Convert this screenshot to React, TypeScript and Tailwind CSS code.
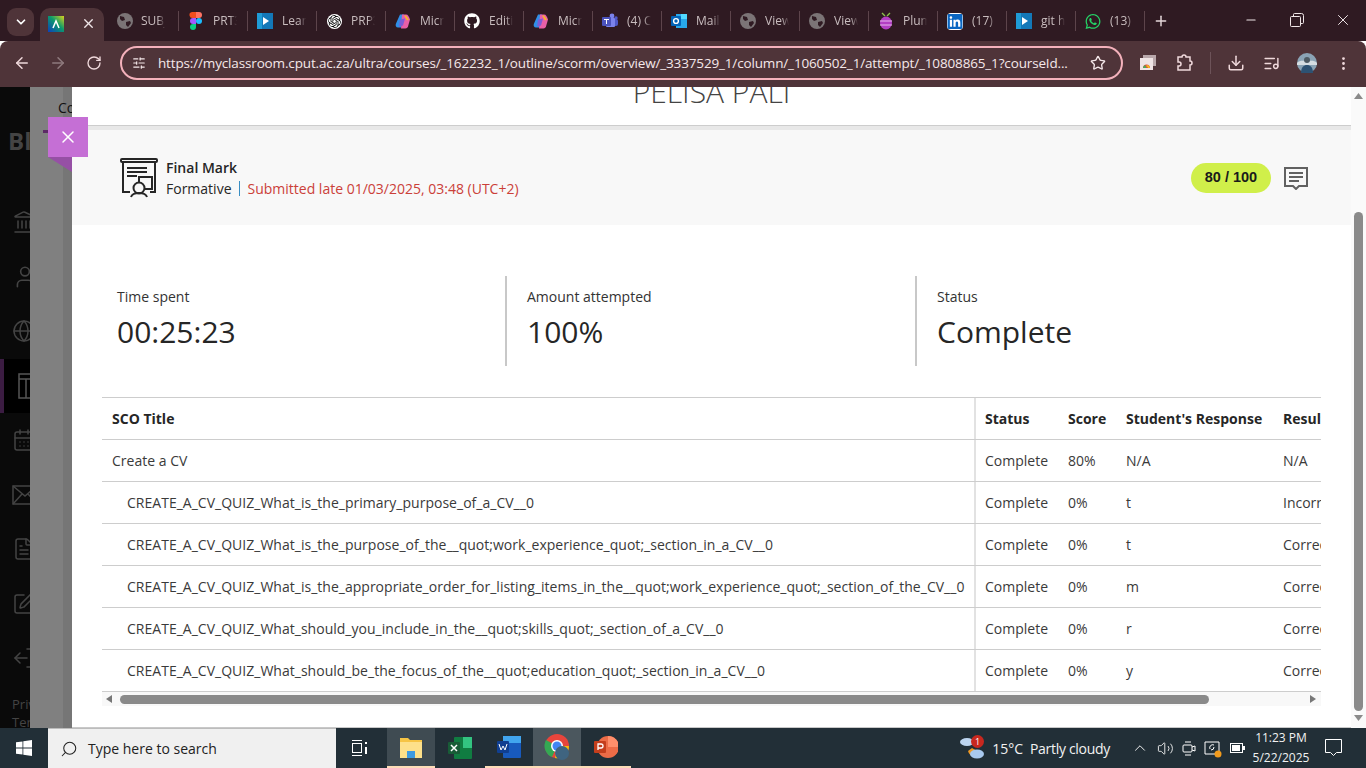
import React from "react";
import {
  ArrowLeft, ArrowRight, RotateCw, Star, Download, Minus, Plus, X, ChevronDown, ChevronUp, SlidersHorizontal,
  ListMusic, MoreVertical, Landmark, User, Globe, CalendarDays, FileText, SquarePen, LogOut, Search, Volume2,
} from "lucide-react";
import { FaGithub, FaLinkedin, FaWhatsapp } from "react-icons/fa";
import { SiOpenai } from "react-icons/si";

const Earth = () => (
  <svg width="16" height="16" viewBox="0 0 16 16"><circle cx="8" cy="8" r="8" fill="#7b7476" /><path d="M3 3l4 1 1 3-3 1-2-2zM9 9l4-1 1 2-3 4-2-2z" fill="#2f1a22" /></svg>
);
const Figma = () => (
  <svg width="16" height="18" viewBox="0 0 12 18">
    <path d="M2 0h4v6H3a3 3 0 0 1-1-6z" fill="#f24e1e" /><path d="M6 0h3a3 3 0 0 1 0 6H6z" fill="#ff7262" />
    <path d="M3 6h3v6H3a3 3 0 0 1 0-6z" fill="#a259ff" /><circle cx="9" cy="9" r="3" fill="#1abcfe" />
    <path d="M3 12h3v3a3 3 0 1 1-3-3z" fill="#0acf83" />
  </svg>
);
const LearnIcon = () => (
  <svg width="16" height="16" viewBox="0 0 16 16"><rect width="16" height="16" fill="#1378b8" /><rect width="5" height="16" fill="#1f9bd6" /><path d="M6 4l6 4-6 4z" fill="#fff" /></svg>
);
const Copilot = () => (
  <svg width="17" height="17" viewBox="0 0 16 16">
    <path d="M5 1h4L6 14H3C1 14 0 12 1 10z" fill="#2f8fe8" /><path d="M7 1h4c2 0 3 2 4 5l-2 7c-1 2-2 2-4 2H6z" fill="#e85fa8" />
    <path d="M9 2h2l3 4-2 1z" fill="#f7b32b" /><path d="M5 6l5-1-2 7-4 1z" fill="#7b5cd6" />
  </svg>
);
const Teams = () => (
  <svg width="16" height="16" viewBox="0 0 16 16"><circle cx="10" cy="3" r="2.4" fill="#7b83eb" /><circle cx="14" cy="5" r="1.7" fill="#5059c9" /><rect x="8" y="6" width="8" height="7" rx="2" fill="#5059c9" /><rect x="4" y="5" width="9" height="9" rx="1" fill="#7b83eb" /><rect x="0" y="4" width="9" height="9" rx="1" fill="#4b53bc" /><path d="M2 6h5v1H5v4H4V7H2z" fill="#fff" /></svg>
);
const Outlook = () => (
  <svg width="16" height="16" viewBox="0 0 16 16"><rect x="5" y="1" width="11" height="14" fill="#28a8ea" /><rect x="10" y="1" width="6" height="5" fill="#50d9ff" /><rect x="0" y="3" width="10" height="10" rx="1" fill="#0364b8" /><circle cx="5" cy="8" r="2.4" fill="none" stroke="#fff" strokeWidth="1.4" /></svg>
);
const Plum = () => (
  <svg width="16" height="18" viewBox="0 0 16 18"><path d="M4 1l3 3M12 1L9 4" stroke="#8bc34a" strokeWidth="1.4" /><ellipse cx="8" cy="11" rx="6" ry="6.500" fill="#b33fc4" /><path d="M2 9h12M2 13h12" stroke="#e7b6ef" strokeWidth="1.2" /></svg>
);
const AntIcon = () => (
  <svg width="16" height="16" viewBox="0 0 16 16">
    <defs><linearGradient id="ant" x1="0" y1="1" x2="1" y2="0"><stop offset="0" stopColor="#0b3fbf" /><stop offset="0.55" stopColor="#0b9a6b" /><stop offset="1" stopColor="#d9d21f" /></linearGradient></defs>
    <rect width="16" height="16" fill="url(#ant)" /><path d="M5 12l3-7 3 7" stroke="#fff" strokeWidth="1.5" fill="none" />
  </svg>
);
const tabs: [React.ReactNode, string][] = [
  [<Earth />, "SUBJ"],
  [<Figma />, "PRT3"],
  [<LearnIcon />, "Learn"],
  [<SiOpenai size={15} className="rounded-full bg-white p-[1px] text-black" />, "PRP3"],
  [<Copilot />, "Micro"],
  [<FaGithub size={16} color="#fff" />, "Editin"],
  [<Copilot />, "Micro"],
  [<Teams />, "(4) C"],
  [<Outlook />, "Mail"],
  [<Earth />, "View"],
  [<Earth />, "View"],
  [<Plum />, "Plum"],
  [<FaLinkedin size={17} color="#0a66c2" className="rounded-sm bg-white" />, "(17)"],
  [<LearnIcon />, "git h"],
  [<FaWhatsapp size={17} color="#25d366" />, "(13)"],
];
const rows = [
  ["Create a CV", "Complete", "80%", "N/A", "N/A", false],
  ["CREATE_A_CV_QUIZ_What_is_the_primary_purpose_of_a_CV__0", "Complete", "0%", "t", "Incorrect", true],
  ["CREATE_A_CV_QUIZ_What_is_the_purpose_of_the__quot;work_experience_quot;_section_in_a_CV__0", "Complete", "0%", "t", "Correct", true],
  ["CREATE_A_CV_QUIZ_What_is_the_appropriate_order_for_listing_items_in_the__quot;work_experience_quot;_section_of_the_CV__0", "Complete", "0%", "m", "Correct", true],
  ["CREATE_A_CV_QUIZ_What_should_you_include_in_the__quot;skills_quot;_section_of_a_CV__0", "Complete", "0%", "r", "Correct", true],
  ["CREATE_A_CV_QUIZ_What_should_be_the_focus_of_the__quot;education_quot;_section_in_a_CV__0", "Complete", "0%", "y", "Correct", true],
] as const;

const Row = ({ cells, head, indent }: { cells: readonly string[]; head?: boolean; indent?: boolean }) => (
  <div className={`flex h-[42px] w-[1300px] items-center border-b border-[#cdcdcd] text-[14px] ${head ? "font-bold text-[#262626]" : "text-[#3a3a3a]"}`}>
    <div className={`flex h-full w-[874px] shrink-0 items-center whitespace-nowrap border-r-2 border-[#e2e2e2] ${head ? "" : "tracking-[0.016px]"} ${indent ? "pl-[25px]" : "pl-[10px]"}`}>{cells[0]}</div>
    <div className="w-[92px] shrink-0 pl-[9px]">{cells[1]}</div>
    <div className="w-[58px] shrink-0">{cells[2]}</div>
    <div className="w-[157px] shrink-0">{cells[3]}</div>
    <div className="w-[100px] shrink-0">{cells[4]}</div>
  </div>
);

const Stat = ({ label, value, last }: { label: string; value: string; last?: boolean }) => (
  <div className={`h-[90px] w-[410px] pl-[20px] pt-[11px] ${last ? "" : "border-r-2 border-[#c8c8c8]"}`}>
    <div className="text-[14px] leading-[20px] text-[#333]">{label}</div>
    <div className="mt-[5px] text-[30px] leading-[40px] text-[#262626]">{value}</div>
  </div>
);

const SideIcon = ({ children, active }: { children: React.ReactNode; active?: boolean }) => (
  <div className={`flex h-[54.5px] shrink-0 items-center text-[#444] ${active ? "border-l-4 border-[#3b1c42] bg-black pl-[14px]" : "pl-[12px]"}`}>{children}</div>
);

export default function App() {
  return (
    <div className="flex h-[768px] w-[1366px] flex-col overflow-hidden bg-white font-['Open_Sans',sans-serif]">
      {/* tab strip */}
      <div className="flex h-[41px] shrink-0 items-end bg-[#2f1a22] text-[#c9bdbf]">
        <div className="mb-[5px] ml-[7px] flex h-[28px] w-[27px] items-center justify-center rounded-[9px] bg-[#4f3439] text-white"><ChevronDown size={14} strokeWidth={3} /></div>
        <div className="ml-[6px] flex h-[33px] w-[64px] items-center rounded-t-[10px] bg-[#4f3439] pb-[2px] pl-[8px]">
          <AntIcon />
          <X size={15} strokeWidth={2.2} color="#f0e6e8" className="ml-[17px]" />
        </div>
        <div className="ml-[4px] flex h-[41px] items-center pt-[1px]">
          {tabs.map(([icon, text], i) => (
            <div key={i} className={`flex h-[20px] items-center border-r border-[#5d444b] pl-[9px] ${i === 0 ? "w-[71px]" : "w-[69px]"}`}>
              <div className="flex w-[16px] shrink-0 justify-center">{icon}</div>
              <div className={`w-[24px] overflow-hidden whitespace-nowrap text-[12px] [mask-image:linear-gradient(to_right,black_70%,transparent)] ${i === 0 ? "ml-[8px]" : "ml-[9px]"}`}>{text}</div>
            </div>
          ))}
          <Plus size={16} strokeWidth={2.2} color="#e6d8da" className="ml-[8px]" />
        </div>
        <div className="flex-1" />
        <div className="flex h-[41px] items-center pb-[1px] text-[#f0e6e8]">
          <div className="flex w-[46px] justify-center"><Minus size={14} /></div>
          <div className="flex w-[46px] justify-center">
            <svg width="14" height="14" viewBox="0 0 14 14" fill="none" stroke="#f0e6e8"><path d="M3.500 3V1.500a1 1 0 0 1 1-1h7a2 2 0 0 1 2 2v7a1 1 0 0 1-1 1H11" /><rect x=".5" y="3.500" width="10" height="10" rx="1" /></svg>
          </div>
          <div className="flex w-[46px] justify-center"><X size={18} strokeWidth={1.3} /></div>
        </div>
      </div>
      {/* toolbar */}
      <div className="flex h-[46px] shrink-0 items-center rounded-t-[8px] bg-[#4f3439] pb-[2px] text-[#f0d9dc]">
        <ArrowLeft size={18} className="ml-[13px]" />
        <ArrowRight size={18} color="#8f7a7e" className="ml-[18px]" />
        <RotateCw size={16} className="ml-[19px]" />
        <div className="ml-[18px] flex h-[34px] w-[1003px] items-center rounded-full border-2 border-[#f3b1bb] pl-[10px] pr-[15px] text-[#f5e8ea]">
          <SlidersHorizontal size={14} />
          <span className="ml-[12px] w-[912px] whitespace-nowrap text-[13.5px] tracking-[-0.15px]">https://myclassroom.cput.ac.za/ultra/courses/_162232_1/outline/scorm/overview/_3337529_1/column/_1060502_1/attempt/_10808865_1?courseId...</span>
          <Star size={16} className="ml-[21px]" />
        </div>
        <svg className="ml-[17px]" width="16" height="16" viewBox="0 0 16 16"><rect x="3" y="0" width="13" height="11" fill="#b9a8ab" /><rect y="3" width="13" height="12" fill="#efe4e5" /><path d="M3 13a3.500 3.500 0 0 1 7 0z" fill="#e44c3c" /><path d="M3 13a3.500 3.500 0 0 1 2-3l1.500 3z" fill="#49a85a" /><path d="M8 13a1.500 1.500 0 0 0-1.500-1.500V10a3.500 3.500 0 0 1 3.500 3z" fill="#f4bc1c" /></svg>
        <svg className="ml-[20px]" width="18" height="18" viewBox="0 0 18 18" fill="none" stroke="#f0d9dc" strokeWidth="1.5"><path d="M2 3h4a2 2 0 0 1 4 0h4v4a2 2 0 0 1 0 4v5H2v-4h1a2 2 0 0 0 0-4H2z" /></svg>
        <div className="ml-[16px] h-[22px] w-px bg-[#6d5359]" />
        <Download size={18} className="ml-[16px]" />
        <ListMusic size={17} className="ml-[18px]" />
        <svg className="ml-[17px]" width="20" height="20" viewBox="0 0 20 20"><circle cx="10" cy="10" r="10" fill="#8aa3b5" /><path d="M0 10c3-3 6-2 10-2s7-1 10 2v2H0z" fill="#d5dde2" /><circle cx="10" cy="7" r="3" fill="#4d5a63" /><path d="M4 20c0-6 3-8 6-8s6 2 6 8z" fill="#2d5273" /></svg>
        <MoreVertical size={17} className="ml-[18px]" />
      </div>
      {/* content */}
      <div className="relative flex min-h-0 flex-1">
        <div className="flex w-[30px] shrink-0 flex-col overflow-hidden bg-[#0a0a0a] text-[#444]">
          <div className="ml-[8px] mt-[42px] h-[66px] shrink-0 whitespace-nowrap text-[24px] font-bold leading-[24px]">Bl</div>
          <SideIcon><Landmark size={24} strokeWidth={1.5} className="shrink-0" /></SideIcon>
          <SideIcon><User size={26} strokeWidth={1.5} className="shrink-0" /></SideIcon>
          <SideIcon><Globe size={24} strokeWidth={1.5} className="shrink-0" /></SideIcon>
          <SideIcon active>
            <svg className="shrink-0" width="26" height="26" viewBox="0 0 26 26" fill="none" stroke="#555" strokeWidth="1.5"><rect x="1" y="1" width="24" height="24" /><path d="M1 6h24M8 6v19" /></svg>
          </SideIcon>
          <SideIcon><CalendarDays size={24} strokeWidth={1.5} className="shrink-0" /></SideIcon>
          <SideIcon>
            <svg className="shrink-0" width="26" height="20" viewBox="0 0 26 20" fill="none" stroke="#444" strokeWidth="1.5"><rect x="1" y="1" width="24" height="18" /><path d="M1 1l12 10L25 1M1 19l9-10M25 19l-9-10" /></svg>
          </SideIcon>
          <SideIcon><FileText size={24} strokeWidth={1.5} className="shrink-0" /></SideIcon>
          <SideIcon><SquarePen size={24} strokeWidth={1.5} className="shrink-0" /></SideIcon>
          <SideIcon><LogOut size={24} strokeWidth={1.5} className="shrink-0 rotate-180" /></SideIcon>
          <div className="ml-[12px] mt-[9px] shrink-0 whitespace-nowrap text-[13px] leading-[18px]">Priv<br />Ter</div>
        </div>
        <div className="flex w-[42px] shrink-0 bg-[#808080]">
          <div className="relative z-10 w-[33px] whitespace-nowrap pl-[28px] pt-[10px] text-[14px] text-[#111]">Co</div>
          <div className="w-[9px] bg-[#767676]" />
        </div>
        <main className="relative z-20 flex w-[1279px] shrink-0 flex-col overflow-hidden border-b border-[#c8c8c8] bg-white">
          <div className="flex h-[38px] shrink-0 items-end justify-center overflow-hidden text-[30px] font-light leading-[38px] text-[#444]"><span className="mb-[14px] block shrink-0">PELISA PALI</span></div>
          <div className="h-[5px] shrink-0 border-t border-[#cdcdcd] bg-[#e8e8e8]" />
          <div className="flex h-[95px] shrink-0 items-center bg-[#f8f8f8] pl-[48px] pr-[43px]">
            <svg width="38" height="40" viewBox="0 0 38 40" fill="none" stroke="#262626" strokeWidth="2">
              <rect x="1" y="1" width="36" height="3" rx="1" />
              <path d="M3 4v30h7M35 4v30h-5" />
              <path d="M7 10h20M7 14h20M7 18h10" />
              <rect x="19" y="19" width="13" height="12" />
              <circle cx="19" cy="30" r="5.500" fill="#f8f8f8" />
              <path d="M11 39c1-3 4-4 8-4s7 1 8 4" />
            </svg>
            <div className="ml-[8px] flex flex-col text-[14px] leading-[21px]">
              <div className="font-semibold text-[#262626]">Final Mark</div>
              <div className="flex items-center">
                <span className="text-[#262626]">Formative</span>
                <span className="ml-[7px] mr-[8px] h-[15px] w-px bg-[#3a8fc4]" />
                <span className="text-[#cb4038]">Submitted late 01/03/2025, 03:48 (UTC+2)</span>
              </div>
            </div>
            <div className="flex-1" />
            <div className="flex h-[30px] w-[80px] items-center justify-center rounded-full bg-[#d0ef4a] font-['Liberation_Sans',sans-serif] text-[14.5px] font-bold text-[#1a1a1a]">80 / 100</div>
            <svg className="ml-[13px]" width="24" height="24" viewBox="0 0 24 24" fill="none" stroke="#616161" strokeWidth="2">
              <path d="M1 2h22v18h-8l-3 3-3-3H1z" />
              <path d="M5 7h14M5 11h14M5 15h10" />
            </svg>
          </div>
          <div className="ml-[25px] mt-[51px] flex shrink-0"><Stat label="Time spent" value="00:25:23" /><Stat label="Amount attempted" value="100%" /><Stat label="Status" value="Complete" last /></div>
          <div className="mx-[30px] mt-[31px] w-[1219px] shrink-0 overflow-hidden border-t border-[#cdcdcd]">
            <Row head cells={["SCO Title", "Status", "Score", "Student's Response", "Result"]} />
            {rows.map((r, i) => (<Row key={i} indent={r[5]} cells={[r[0], r[1], r[2], r[3], r[4]]} />))}
            <div className="flex h-[14px] items-center bg-[#f8f8f8]">
              <svg className="ml-[4px]" width="6" height="8" viewBox="0 0 6 8"><path d="M6 0v8L0 4z" fill="#777" /></svg>
              <div className="ml-[8px] h-[9px] w-[1089px] rounded-full bg-[#8a8a8a]" />
              <svg className="ml-[101px]" width="6" height="8" viewBox="0 0 6 8"><path d="M0 0v8l6-4z" fill="#777" /></svg>
            </div>
          </div>
        </main>
        <div className="flex w-[15px] shrink-0 flex-col items-center bg-[#fafafa]">
          <svg className="mt-[6px]" width="9" height="6" viewBox="0 0 9 6"><path d="M0 6h9L4.500 0z" fill="#8a8a8a" /></svg>
          <div className="mt-[113px] h-[499px] w-[9px] rounded-full bg-[#8a8a8a]" />
          <svg className="mt-[4px]" width="9" height="6" viewBox="0 0 9 6"><path d="M0 0h9L4.500 6z" fill="#8a8a8a" /></svg>
        </div>
        {/* close tab */}
        <div className="absolute left-[43px] top-[43px] h-[3px] w-[5px] bg-[#5c2a66]" />
        <div className="absolute left-[48px] top-[30px] z-30 flex h-[40px] w-[40px] items-center justify-center bg-[#c56fd5] text-white"><X size={20} strokeWidth={1.8} /></div>
        <svg className="absolute left-[48px] top-[70px] z-30" width="24" height="15" viewBox="0 0 24 15"><path d="M0 0h24v15z" fill="#9650a5" /></svg>
      </div>
      {/* taskbar */}
      <div className="flex h-[40px] shrink-0 items-center bg-[#222f37] text-[#f2f2f2]">
        <svg className="ml-[16px]" width="16" height="16" viewBox="0 0 16 16" fill="#fff"><path d="M0 2.300l6.500-.9v6.200H0zM7.300 1.300L16 0v7.600H7.300zM0 8.400h6.500v6.200L0 13.700zM7.300 8.400H16V16l-8.700-1.200z" /></svg>
        <div className="ml-[16px] flex h-[40px] w-[288px] items-center border-t border-[#bcbcbc] bg-[#f0f0f0] pl-[12px] text-[#222]">
          <Search size={18} strokeWidth={1.4} className="-scale-x-100" />
          <span className="ml-[10px] text-[14px]">Type here to search</span>
        </div>
        <svg className="ml-[16px]" width="16" height="16" viewBox="0 0 16 16" fill="none" stroke="#fff"><path d="M0 .500h10M0 15.500h10" /><rect x=".5" y="3.500" width="9" height="9" /><path d="M14 2v2M14 7v7" strokeWidth="2" /></svg>
        <div className="ml-[19px] flex h-[40px] w-[48px] items-center justify-center border-b-2 border-[#fbdcb7] bg-[#3f4b52]">
          <svg width="22" height="22" viewBox="0 0 22 22"><path d="M0 2h8l2 2h12v18H0z" fill="#f6c445" /><path d="M0 6h22v16H0z" fill="#fde08a" /><path d="M7 15h8v7H7z" fill="#3d9ae0" /></svg>
        </div>
        <div className="flex h-[40px] w-[50px] items-center justify-center">
          <svg width="24" height="22" viewBox="0 0 24 22"><rect x="6" width="18" height="22" rx="1" fill="#107c41" /><rect x="15" width="9" height="11" fill="#33c481" /><rect y="5" width="12" height="12" rx="1" fill="#185c37" /><path d="M3 8l6 6M9 8l-6 6" stroke="#fff" strokeWidth="1.500" /></svg>
        </div>
        <div className="flex h-[40px] w-[48px] items-center justify-center border-b-2 border-[#fbdcb7]">
          <svg width="24" height="22" viewBox="0 0 24 22"><rect x="6" width="18" height="22" rx="1" fill="#185abd" /><rect x="6" width="18" height="7" fill="#41a5ee" /><rect y="5" width="12" height="12" rx="1" fill="#103f91" /><path d="M2 8l2 6 2-4 2 4 2-6" stroke="#fff" fill="none" /></svg>
        </div>
        <div className="relative flex h-[40px] w-[48px] items-center justify-center border-b-2 border-[#fbdcb7] bg-[#4b575e]">
          <svg width="26" height="28" viewBox="0 0 26 28"><circle cx="13" cy="13" r="12" fill="#e8453c" /><path d="M13 13L2 7A12 12 0 0 0 8 24z" fill="#34a853" /><path d="M13 13h12a12 12 0 0 1-14 12z" fill="#fbbc05" /><circle cx="13" cy="13" r="6" fill="#fff" /><circle cx="13" cy="13" r="4.500" fill="#4285f4" /><circle cx="18" cy="20" r="7" fill="#3f6480" /></svg>
        </div>
        <div className="flex h-[40px] w-[50px] items-center justify-center border-b-2 border-[#fbdcb7]">
          <svg width="24" height="26" viewBox="0 0 24 26"><circle cx="14" cy="13" r="11" fill="#ed6c47" /><path d="M14 2a11 11 0 0 1 11 11H14z" fill="#ff8f6b" /><rect y="7" width="12" height="12" rx="1" fill="#c43e1c" /><path d="M4 16V10h3a1.500 1.500 0 0 1 0 4H4" stroke="#fff" fill="none" strokeWidth="1.300" /></svg>
        </div>
        <div className="flex-1" />
        <div className="relative flex h-[40px] w-[26px] items-center">
          <svg width="24" height="30" viewBox="0 0 24 30"><path d="M8 18a8 8 0 0 0 14 3l-10-6z" fill="#f09a24" /><ellipse cx="7" cy="9" rx="7" ry="4" fill="#bcd4ef" /><ellipse cx="17" cy="21" rx="7" ry="4.500" fill="#a9c9ee" /></svg>
          <div className="absolute left-[11px] top-[7px] flex h-[13px] w-[13px] items-center justify-center rounded-full bg-[#c8281f] text-[9px] text-white">1</div>
        </div>
        <span className="ml-[6px] text-[14px]">15°C</span>
        <span className="ml-[7px] text-[14px] tracking-[-0.3px]">Partly cloudy</span>
        <ChevronUp size={18} strokeWidth={1.3} className="ml-[21px]" />
        <Volume2 size={17} strokeWidth={1.3} className="ml-[8px]" />
        <svg className="ml-[8px]" width="14" height="18" viewBox="0 0 14 18" fill="none" stroke="#fff"><rect x="1" y="6" width="9" height="7" rx="1" /><path d="M10 8l3-1v5l-3-1M3 3h6M3 16h6" /></svg>
        <svg className="ml-[8px]" width="18" height="20" viewBox="0 0 18 20" fill="none" stroke="#fff"><path d="M1 4h14v12H1z" /><path d="M6 11a3 3 0 0 1 4-4M10 9a3 3 0 0 1-3 3" /><circle cx="14" cy="16" r="3.500" fill="#f29b1d" stroke="none" /></svg>
        <svg className="ml-[8px]" width="15" height="10" viewBox="0 0 15 10"><rect x=".5" y=".5" width="12" height="9" fill="none" stroke="#fff" /><rect x="2" y="2" width="8" height="6" fill="#fff" /><rect x="13" y="3" width="2" height="4" fill="#fff" /></svg>
        <div className="ml-[5px] flex w-[62px] flex-col items-center text-[12px] leading-[20px]"><span>11:23 PM</span><span>5/22/2025</span></div>
        <svg className="ml-[13px] mr-[24px]" width="17" height="18" viewBox="0 0 17 18" fill="none" stroke="#fff"><path d="M.5.500h16v13h-5l-3 3-3-3h-5z" /></svg>
      </div>
    </div>
  );
}
